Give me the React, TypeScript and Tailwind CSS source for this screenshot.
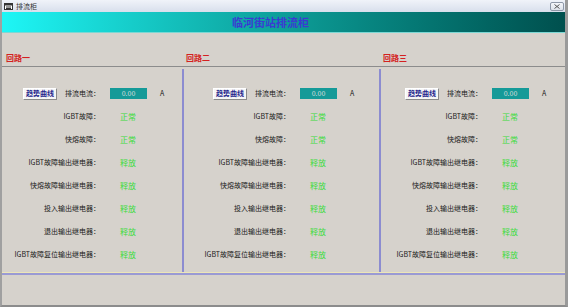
import React from "react"

const rows = [
  "IGBT故障：",
  "快熔故障：",
  "IGBT故障输出继电器：",
  "快熔故障输出继电器：",
  "投入输出继电器：",
  "退出输出继电器：",
  "IGBT故障复位输出继电器：",
]
const values = ["正常", "正常", "释放", "释放", "释放", "释放", "释放"]

interface LoopProps {
  colClass: string
  labelClass: string
}

function LoopColumn({ colClass, labelClass }: LoopProps) {
  return (
    <div className={`flex flex-col pt-[13px] ${colClass}`}>
      {/* current row */}
      <div className="flex h-[23px] items-center">
        <div className={`flex items-center justify-end gap-[8px] ${labelClass}`}>
          <button className="h-[12px] w-[34px] bg-[#f6f6f6] border border-t-white border-l-white border-r-[#8a8a8a] border-b-[#8a8a8a] text-[7px] font-bold leading-none text-[#24248c]">
            趋势曲线
          </button>
          <span className="text-[7px] text-[#1a1a1a]">排流电流：</span>
        </div>
        <div className="ml-[10px] flex h-[11px] w-[37px] items-center justify-center bg-[#159a98] text-[7px] text-[#dcdcdc]">
          0.00
        </div>
        <span className="ml-[13px] text-[7px] text-[#1a1a1a]">A</span>
      </div>
      {rows.map((r, i) => (
        <div key={r} className="flex h-[23px] items-center">
          <div className={`text-right text-[7px] text-[#1a1a1a] ${labelClass}`}>{r}</div>
          <div className="ml-[20px] text-[8px] text-[#3cdc3c]">{values[i]}</div>
        </div>
      ))}
    </div>
  )
}

export default function App() {
  return (
    <div className="flex h-[307px] w-[568px] flex-col overflow-hidden border-l-2 border-r-[3px] border-b-2 border-l-[#a0a0a0] border-r-[#9a9a9a] border-b-[#8c8c8c] bg-[#d6d2cc] font-['Noto_Sans_CJK_SC',sans-serif]">
      {/* title bar */}
      <div className="flex h-[12px] items-center bg-gradient-to-b from-[#f0f3f9] to-[#d8dfec] pl-[2px] pr-[1px]">
        <svg width="9" height="7" viewBox="0 0 9 7" className="mr-[3px]">
          <rect x="0.5" y="0.5" width="8" height="6" fill="#fff" stroke="#333" />
          <rect x="1" y="1" width="7" height="1.5" fill="#333" />
          <line x1="2" y1="4" x2="7" y2="4" stroke="#333" />
          <line x1="2" y1="5.5" x2="7" y2="5.5" stroke="#333" />
        </svg>
        <span className="text-[7px] leading-none text-[#333]">排流柜</span>
        <div className="ml-auto flex h-[9px] w-[14px] items-center justify-center rounded-[2px] border border-[#8e98a8] bg-gradient-to-b from-[#f4f6fa] to-[#dde2ea]">
          <svg width="6" height="5" viewBox="0 0 6 5">
            <path d="M0.5 0.5 L5.5 4.5 M5.5 0.5 L0.5 4.5" stroke="#555" strokeWidth="1" />
          </svg>
        </div>
      </div>

      {/* banner */}
      <div className="flex h-[21px] items-center justify-center border-b border-[#7cd8d4] bg-gradient-to-r from-[#1ef6f6] via-[#0d9e98] to-[#00504e]">
        <span className="mr-[26px] text-[11px] font-bold text-[#3a3ad2]">临河街站排流柜</span>
      </div>

      {/* loop headers */}
      <div className="flex h-[34px] items-end border-b border-[#8c8c8c] pb-[2px] text-[8px] font-bold text-[#d42020]">
        <div className="w-[182px] pl-[4px]">回路一</div>
        <div className="w-[197px] pl-[2px]">回路二</div>
        <div className="flex-1 pl-[2px]">回路三</div>
      </div>

      {/* loops */}
      <div className="mt-[2px] flex h-[204px] border-b border-[#ece6b8]">
        <LoopColumn colClass="w-[182px] border-r-2 border-[#8c8cd0]" labelClass="w-[98px]" />
        <LoopColumn colClass="w-[197px] border-r-2 border-[#8c8cd0]" labelClass="w-[106px]" />
        <LoopColumn colClass="flex-1" labelClass="w-[101px]" />
      </div>
      <div className="h-[2px] bg-[#9a9ad4]" />
    </div>
  )
}
